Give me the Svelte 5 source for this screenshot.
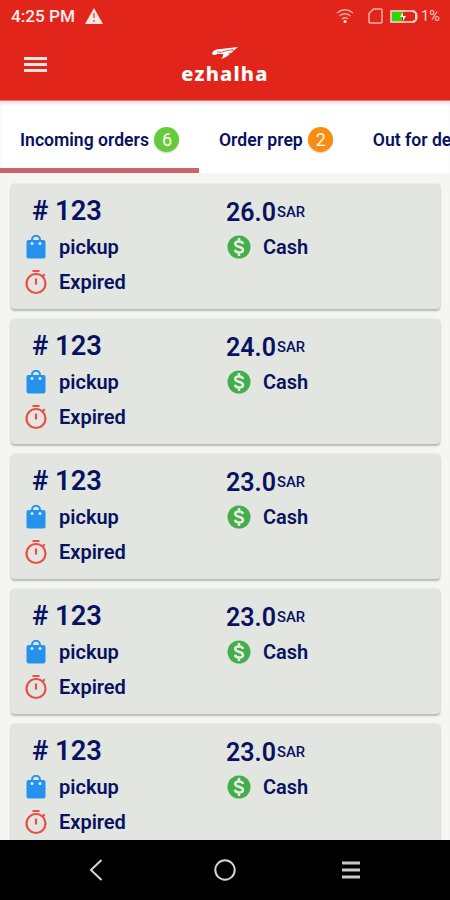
<script>
	const tabs = [
		{ label: "Incoming orders", count: 6, color: "#65cb3c" },
		{ label: "Order prep", count: 2, color: "#fb8c12" },
		{ label: "Out for delivery", count: null, color: "" },
	]

	const orders = [
		{ number: 123, price: "26.0" },
		{ number: 123, price: "24.0" },
		{ number: 123, price: "23.0" },
		{ number: 123, price: "23.0" },
		{ number: 123, price: "23.0" },
	]

	let active = 0
</script>

<div class="phone">
	<header>
		<div class="status">
			<span class="time">4:25 PM</span>
			<svg class="warning" width="18" height="16" viewBox="0 0 18 16">
				<path d="M9 0 18 16H0z" fill="#ffe5e0" />
				<path d="M9 5v5M9 12v2" stroke="#e18178" stroke-width="2" />
			</svg>
			<svg class="wifi" width="18" height="16" viewBox="0 0 18 16" fill="none" stroke="#ffaaa0" stroke-width="1.4">
				<path d="M1 5Q9-1.500 17 5M3.500 8Q9 3.500 14.500 8M6 11Q9 8.500 12 11" />
				<circle cx="9" cy="13.500" r="1.500" fill="#fff0ee" stroke="none" />
			</svg>
			<svg class="sim" width="15" height="16" viewBox="0 0 15 16" fill="none" stroke="#ffb0a7" stroke-width="1.500">
				<path d="M5.500 1h7.500q1 0 1 1v12q0 1-1 1H2q-1 0-1-1V5.500z" />
			</svg>
			<svg class="battery" width="28" height="13" viewBox="0 0 28 13">
				<rect x="1" y="1" width="23" height="11" fill="none" stroke="#ffd0ca" stroke-width="1.700" />
				<path d="M24 1.500h1q2 1 2 3v4q0 2-2 3h-1z" fill="#ffd0ca" stroke="#ffd0ca" />
				<path d="M24 3v7" stroke="#e1251b" stroke-width="2" />
				<rect x="2" y="2" width="10" height="9" fill="#2cd800" />
				<path d="m13 2-3 5h3v4l3-5h-3z" fill="#fff" />
			</svg>
			<span class="percent">1%</span>
		</div>

		<div class="bar">
			<button class="menu" aria-label="Menu">
				<i></i><i></i><i></i>
			</button>
			<div class="logo">
				<svg width="26" height="12" viewBox="0 0 26 12">
					<path d="M0 6Q2 2 9 2L26 0Q23 3.500 18 4.500L22 4Q19 7 15 7L18 7Q14 11 9 12Q12 9 11 7Q6 6 3 8Q0 8 0 6z" fill="#fff" />
					<path d="M5 5Q10 6 13 4L21 2.500" fill="none" stroke="#db463e" stroke-width=".9" />
				</svg>
				<span>ezhalha</span>
			</div>
		</div>
	</header>

	<nav>
		{#each tabs as tab, i}
			<button class="tab" class:active={active === i} on:click={() => (active = i)}>
				{tab.label}
				{#if tab.count}
					<span class="badge" style="background: {tab.color}">{tab.count}</span>
				{/if}
			</button>
		{/each}
	</nav>

	<main>
		{#each orders as order}
			<article class="card">
				<div class="col">
					<h2># {order.number}</h2>
					<div class="row">
						<svg width="20" height="24" viewBox="0 0 20 24">
							<path d="M6 6V4.800a4 4 0 0 1 8 0V6" fill="none" stroke="#2593ee" stroke-width="2" />
							<rect x=".5" y="5" width="19" height="18.500" rx="2" fill="#2593ee" />
							<circle cx="6" cy="8.500" r="1.500" fill="#d8ecef" />
							<circle cx="14" cy="8.500" r="1.500" fill="#d8ecef" />
						</svg>
						<span>pickup</span>
					</div>
					<div class="row">
						<svg width="22" height="26" viewBox="0 0 22 26" fill="none" stroke="#e94f45" stroke-width="2.200">
							<circle cx="11" cy="14.500" r="9.500" />
							<path d="M7.500 2h7M17.500 7.500l2.200-2.200M11 9.500v6" />
						</svg>
						<span>Expired</span>
					</div>
				</div>
				<div class="col second">
					<p class="price">{order.price}<small>SAR</small></p>
					<div class="row">
						<svg width="24" height="24" viewBox="0 0 24 24">
							<circle cx="12" cy="12" r="11.500" fill="#45ae4c" />
							<path d="M12 3v3.500M12 17.500v3.500M16 9Q15.500 6.500 12 6.500Q8.200 6.500 8.200 9C8.200 12.500 16 11 16 15Q16 17.500 12 17.500Q8.500 17.500 8 14.800" fill="none" stroke="#e4efe1" stroke-width="2.500" />
						</svg>
						<span>Cash</span>
					</div>
				</div>
			</article>
		{/each}
	</main>

	<footer>
		<svg width="14" height="22" viewBox="0 0 14 22" fill="none" stroke="#d4d4d4" stroke-width="2">
			<path d="M12.500 1 2 11l10.500 10" />
		</svg>
		<svg class="home" width="22" height="22" viewBox="0 0 22 22" fill="none" stroke="#d4d4d4" stroke-width="2">
			<circle cx="11" cy="11" r="9.700" />
		</svg>
		<svg width="18" height="18" viewBox="0 0 18 18" stroke="#c8c8c8" stroke-width="3">
			<path d="M0 2h18M0 9h18M0 16h18" />
		</svg>
	</footer>
</div>

<style>
	:global(body) {
		margin: 0;
	}

	.phone {
		display: flex;
		flex-direction: column;
		width: 450px;
		height: 900px;
		overflow: hidden;
		background: #f5f5f2;
		font-family: Roboto, "Liberation Sans", sans-serif;
		color: #071260;
	}

	button {
		border: none;
		background: none;
		padding: 0;
		font: inherit;
		color: inherit;
	}

	svg {
		display: block;
		flex: none;
	}

	header {
		flex: none;
		box-sizing: border-box;
		height: 101px;
		background: #e1251b;
		border-bottom: 1px solid #e2746d;
		color: #fff;
	}

	.status {
		display: flex;
		align-items: center;
		height: 32px;
		padding: 0 9px 0 11px;
	}

	.time {
		width: 74px;
		font-size: 17.2px;
		font-weight: 500;
		color: #ffeeeb;
	}

	.wifi {
		margin-left: auto;
	}

	.sim {
		margin-left: 14px;
	}

	.battery {
		margin: 0 3px 0 7px;
	}

	.percent {
		width: 20px;
		font-size: 14.5px;
		color: #ffd6d1;
		white-space: nowrap;
	}

	.bar {
		display: grid;
		grid-template-columns: 1fr auto 1fr;
		height: 68px;
		padding: 0 24px;
	}

	.menu {
		display: flex;
		flex-direction: column;
		gap: 3px;
		width: 23px;
		height: 15px;
		margin-top: 25px;
	}

	.menu i {
		width: 23px;
		height: 3px;
		flex: none;
		background: #ffe3df;
	}

	.logo {
		display: flex;
		flex-direction: column;
		align-items: center;
		padding-top: 15px;
	}

	.logo span {
		margin-top: 2px;
		font: 800 20px/26px "Noto Sans", sans-serif;
		letter-spacing: 1.2px;
	}

	nav {
		display: flex;
		flex: none;
		height: 72px;
		overflow: hidden;
		background: #fff;
		box-shadow: inset 0 4px 4px -2px #ddd;
	}

	.tab {
		display: flex;
		align-items: center;
		flex: none;
		box-sizing: border-box;
		height: 72px;
		padding: 10px 19.5px 0 20px;
		border-bottom: 5px solid transparent;
		font-size: 17.6px;
		font-weight: 600;
		white-space: nowrap;
	}

	.tab.active {
		border-bottom-color: #ca656a;
	}

	.badge {
		width: 25px;
		height: 25px;
		margin-left: 5.5px;
		border-radius: 50%;
		font-size: 18px;
		font-weight: 400;
		line-height: 25px;
		text-align: center;
		color: #fffde8;
		box-shadow: 0 1px 2px #ccc;
	}

	main {
		flex: 1;
		display: flex;
		flex-direction: column;
		gap: 10px;
		min-height: 0;
		padding: 11px 10px 0 11px;
		overflow: hidden;
	}

	.card {
		display: flex;
		flex: none;
		box-sizing: border-box;
		height: 125px;
		padding: 10px 14px;
		border-radius: 4px;
		background: #e3e5e0;
		box-shadow: 0 2px 2px #b9bab7, 0 0 2px #d2d3cf;
	}

	.col {
		width: 200px;
	}

	.second {
		margin-left: 1px;
	}

	h2 {
		margin: 0 0 0 7px;
		font-size: 27.3px;
		font-weight: 600;
		line-height: 35px;
	}

	.row {
		display: grid;
		grid-template-columns: 21px auto;
		justify-content: start;
		align-items: center;
		justify-items: center;
		column-gap: 13px;
		height: 35px;
		font-size: 20px;
		font-weight: 600;
	}

	.second .row {
		grid-template-columns: 26px auto;
		column-gap: 11px;
	}

	.price {
		display: flex;
		margin: 0;
		height: 35px;
		font-size: 25px;
		font-weight: 600;
		line-height: 37px;
	}

	.price small {
		margin-left: 1px;
		font-size: 14.8px;
		font-weight: 500;
	}

	footer {
		display: flex;
		flex: none;
		align-items: center;
		justify-content: space-between;
		box-sizing: border-box;
		height: 60px;
		padding: 0 90px 0 89px;
		background: #000;
	}

	.home {
		margin-left: 4px;
	}
</style>
